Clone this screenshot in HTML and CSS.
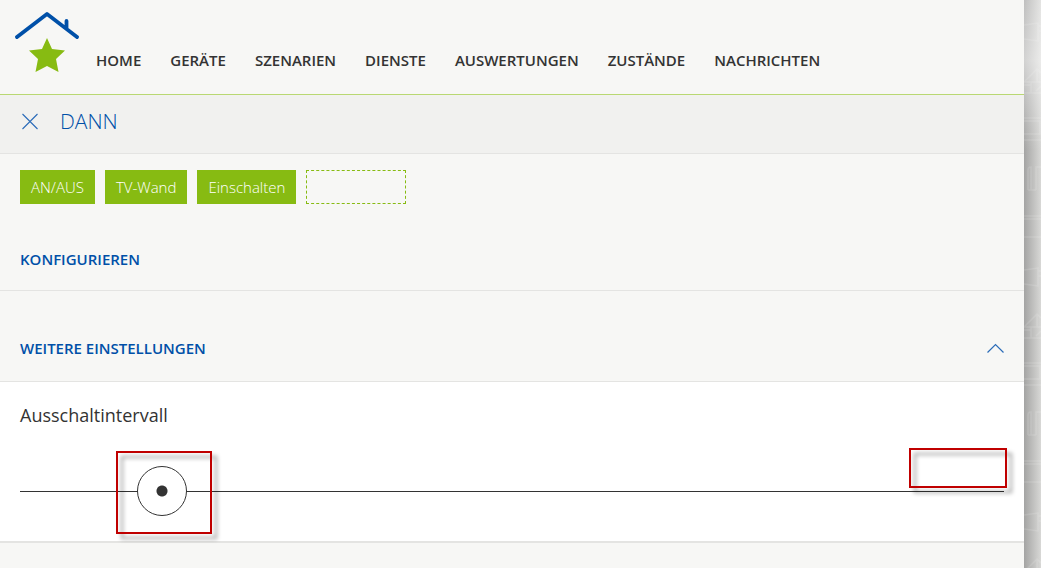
FILE: index.html
```html
<!DOCTYPE html>
<html lang="de">
<head>
    <meta charset="UTF-8">
    <meta name="viewport" content="width=device-width, initial-scale=1.0">
    <title>Szenarien</title>
    <link rel="stylesheet" href="styles.css">
</head>
<body>
    <div class="page">
        <header class="header">
            <a class="logo" href="#" aria-label="Startseite">
                <svg width="64" height="62" viewBox="0 0 64 62">
                    <path d="M2 25 L32 2 L62 25 M51.500 16 V9" fill="none" stroke="#0050a8" stroke-width="3.800" stroke-linecap="round" stroke-linejoin="round"/>
                    <path d="M32 26 L37 37 L50 38.500 L41 47 L43.500 60 L32 54 L20.500 60 L23 47 L14 38.500 L27 37 Z" fill="#87bb12"/>
                </svg>
            </a>
            <nav class="nav">
                <a href="#">HOME</a>
                <a href="#">GERÄTE</a>
                <a href="#">SZENARIEN</a>
                <a href="#">DIENSTE</a>
                <a href="#">AUSWERTUNGEN</a>
                <a href="#">ZUSTÄNDE</a>
                <a href="#">NACHRICHTEN</a>
            </nav>
        </header>
        <div class="title-bar">
            <button class="icon-button" type="button" aria-label="Schließen">
                <svg width="18" height="18" viewBox="0 0 18 18">
                    <path d="M1.500 2 L16.500 17 M16.500 2 L1.500 17" fill="none" stroke="#2b6cb8" stroke-width="1.100"/>
                </svg>
            </button>
            <h1>DANN</h1>
        </div>
        <main>
            <div class="chips">
                <button class="chip" type="button">AN/AUS</button>
                <button class="chip" type="button">TV-Wand</button>
                <button class="chip" type="button">Einschalten</button>
                <span class="chip-empty"></span>
            </div>
            <div class="section-head configure">
                <h2>KONFIGURIEREN</h2>
            </div>
            <div class="section-head more">
                <h2>WEITERE EINSTELLUNGEN</h2>
                <button class="icon-button" type="button" aria-label="Zuklappen">
                    <svg width="18" height="12" viewBox="0 0 18 12">
                        <path d="M1.500 10.500 L9.500 2.500 L17.500 10.500" fill="none" stroke="#2b6cb8" stroke-width="1.200"/>
                    </svg>
                </button>
            </div>
            <section class="panel">
                <label for="interval">Ausschaltintervall</label>
                <div class="slider">
                    <input type="range" id="interval" min="0" max="8" value="1">
                    <span class="mark mark-thumb"></span>
                    <span class="mark mark-value"></span>
                </div>
            </section>
        </main>
    </div>
    <div class="backdrop" aria-hidden="true">
        <svg width="100%" height="100%">
            <defs>
                <pattern id="icons" width="17" height="245" patternUnits="userSpaceOnUse">
                    <g fill="none" stroke="#fff" stroke-opacity="0.120" stroke-width="1.500">
                        <path d="M0 25 L14 23 V41 L0 39 M14 26 H17 M14 31 H17"/>
                        <path d="M0 82 L13 69 L17 73 M13 69 V82 M0 82 H17 M7 82 V93 M0 85 H7 M0 93 H17 M17 86 L12 91"/>
                        <path d="M0 118 H17 M0 121 H16 V134 H0 M0 140 H17"/>
                        <path d="M4 190 V170 Q4 167 7 167 V190 M12 190 V167 H17 M4 190 H12"/>
                        <path d="M0 216 H17 M0 219 H17 M0 237 H17"/>
                    </g>
                </pattern>
            </defs>
            <rect width="100%" height="100%" fill="url(#icons)"/>
        </svg>
    </div>
</body>
</html>
```
FILE: styles.css
```css
* { margin: 0; padding: 0; box-sizing: border-box; }
body {
    display: flex;
    min-height: 100vh;
    font-family: "Open Sans", sans-serif;
    font-size: 15px;
    color: #333;
    background-color: #dededd;
}
.page {
    flex: 1;
    background-color: #f7f7f5;
}
.backdrop {
    width: 17px;
    background:
        linear-gradient(rgba(255, 255, 255, 0.3), rgba(255, 255, 255, 0.5) 60px, transparent 150px),
        linear-gradient(to right, #a4a4a3, #d8d8d6);
}
.backdrop svg { display: block; }
a { color: inherit; text-decoration: none; }
button { font: inherit; border: none; cursor: pointer; }

/* Header */
.header {
    display: flex;
    align-items: flex-start;
    height: 95px;
    padding: 12px 15px;
    border-bottom: 1px solid #b9d872;
}
.logo svg { display: block; }
.nav {
    display: flex;
    gap: 29px;
    margin-top: 38px;
    padding-left: 17px;
    line-height: 20px;
    font-weight: 600;
}

.title-bar {
    display: flex;
    align-items: center;
    gap: 21px;
    height: 59px;
    padding: 0 21px 6px;
    background-color: #f1f1ef;
    border-bottom: 1px solid #e4e4e2;
}
.title-bar h1 {
    font-size: 21px;
    font-weight: 300;
    line-height: 28px;
    color: #0050a8;
}
.icon-button { background: none; }
.icon-button svg { display: block; }

/* Chips */
.chips {
    display: flex;
    gap: 10px;
    padding: 16px 20px 0;
}
.chip {
    height: 34px;
    padding: 0 11px;
    background-color: #87bb12;
    color: #fff;
    font-weight: 300;
}
.chip-empty {
    width: 100px;
    height: 34px;
    border: 1px dashed #87bb12;
}

/* Sections */
.section-head {
    display: flex;
    align-items: center;
    justify-content: space-between;
    padding: 0 20px;
    border-bottom: 1px solid #e4e4e2;
}
.section-head h2 {
    font-size: 15px;
    font-weight: 600;
    line-height: 20px;
    color: #0050a8;
}
.configure { padding-top: 45px; padding-bottom: 21px; }
.more { padding-top: 47px; padding-bottom: 23px; }

.panel {
    padding: 19px 20px 25px;
    background-color: #fff;
    border-bottom: 2px solid #e4e4e2;
}
.panel label {
    display: block;
    font-size: 18px;
    line-height: 28px;
}
.slider {
    position: relative;
    margin-top: 37px;
}
.slider input {
    display: block;
    width: 100%;
    height: 50px;
    appearance: none;
    background: linear-gradient(#333, #333) center / 100% 1px no-repeat;
}
.slider input::-webkit-slider-thumb {
    appearance: none;
    width: 50px;
    height: 50px;
    border: 1px solid #333;
    border-radius: 50%;
    background: radial-gradient(circle, #333 5px, #fff 6px);
}

/* Red highlight frames */
.mark {
    position: absolute;
    border: 2px solid #c00000;
    filter: drop-shadow(5px 5px 2px rgba(0, 0, 0, 0.4));
    pointer-events: none;
}
.mark-thumb { left: 96px; top: -15px; width: 96px; height: 83px; }
.mark-value { right: -3px; top: -18px; width: 98px; height: 40px; }
```
